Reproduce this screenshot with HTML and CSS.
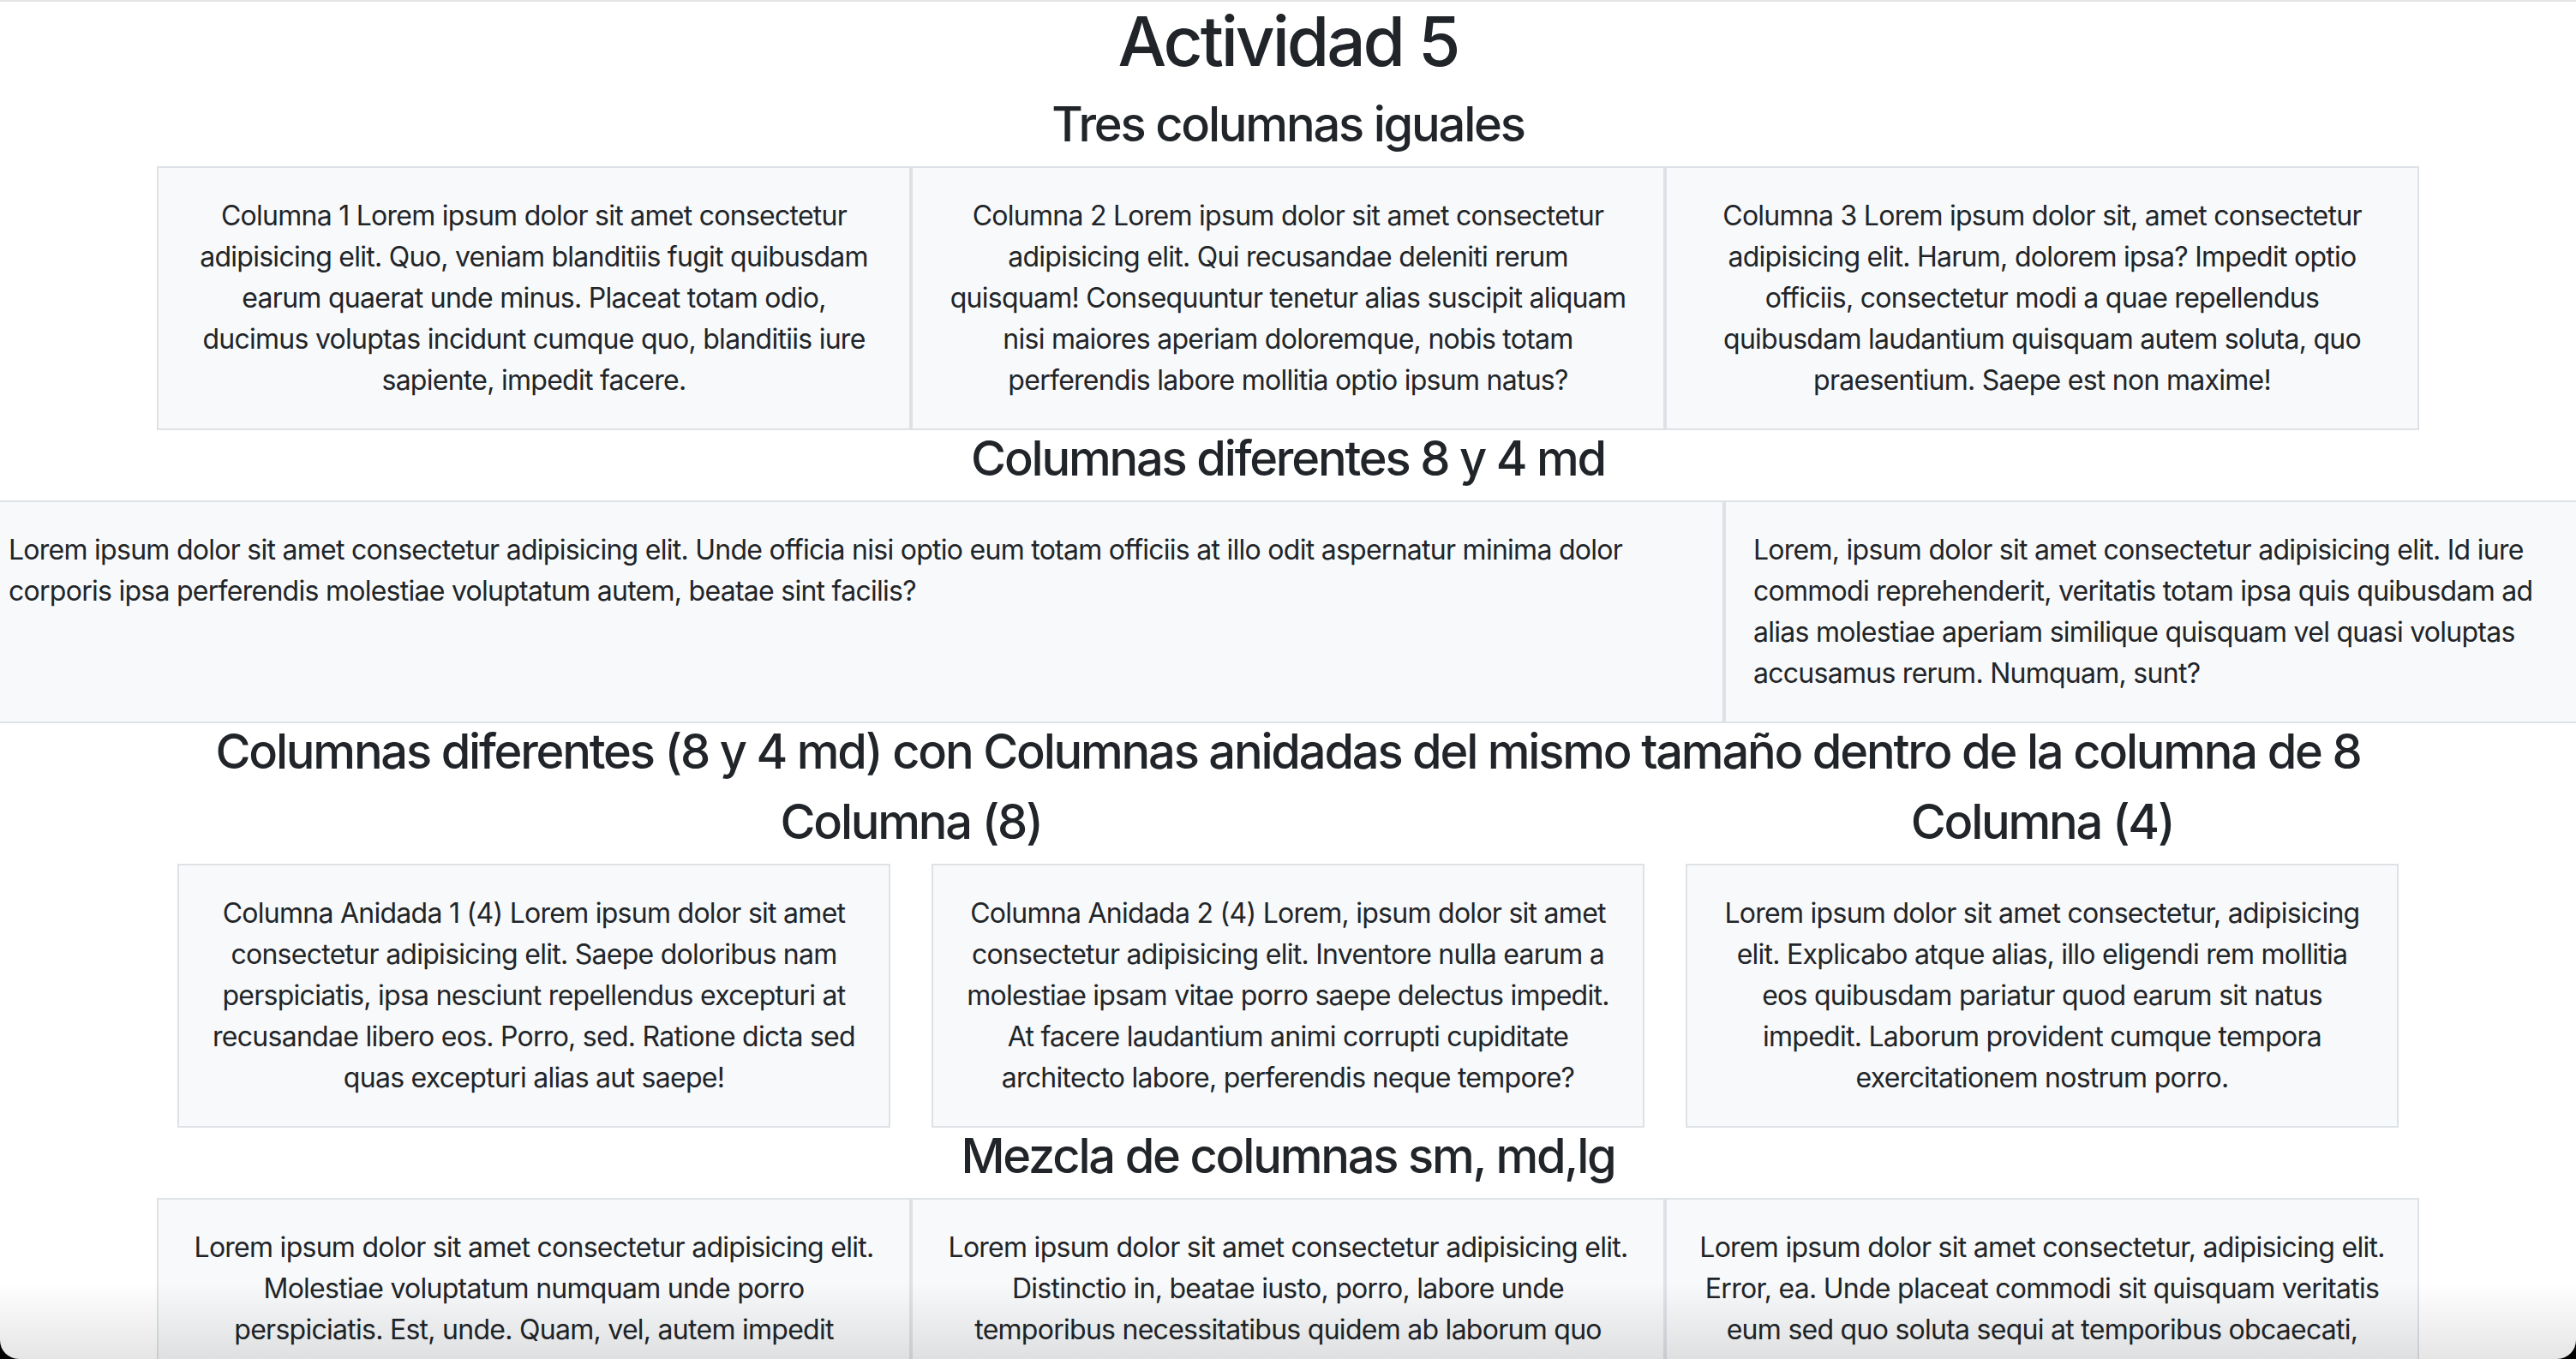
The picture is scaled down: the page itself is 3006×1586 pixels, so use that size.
FILE: index.html
```html
<!DOCTYPE html>
<html lang="es">
<head>
<meta charset="utf-8">
<title>Actividad 5</title>
<link rel="stylesheet" href="styles.css">
</head>
<body>
<div class="page">
  <h1 class="title">Actividad 5</h1>

  <h3 class="heading">Tres columnas iguales</h3>
  <div class="container">
    <div class="row-3">
      <div class="box center">Columna 1 Lorem ipsum dolor sit amet consectetur adipisicing elit. Quo, veniam blanditiis fugit quibusdam earum quaerat unde minus. Placeat totam odio, ducimus voluptas incidunt cumque quo, blanditiis iure sapiente, impedit facere.</div>
      <div class="box center">Columna 2 Lorem ipsum dolor sit amet consectetur adipisicing elit. Qui recusandae deleniti rerum quisquam! Consequuntur tenetur alias suscipit aliquam nisi maiores aperiam doloremque, nobis totam perferendis labore mollitia optio ipsum natus?</div>
      <div class="box center">Columna 3 Lorem ipsum dolor sit, amet consectetur adipisicing elit. Harum, dolorem ipsa? Impedit optio officiis, consectetur modi a quae repellendus quibusdam laudantium quisquam autem soluta, quo praesentium. Saepe est non maxime!</div>
    </div>
  </div>

  <h3 class="heading">Columnas diferentes 8 y 4 md</h3>
  <div class="row-wide">
    <div class="box">Lorem ipsum dolor sit amet consectetur adipisicing elit. Unde officia nisi optio eum totam officiis at illo odit aspernatur minima dolor corporis ipsa perferendis molestiae voluptatum autem, beatae sint facilis?</div>
    <div class="box">Lorem, ipsum dolor sit amet consectetur adipisicing elit. Id iure commodi reprehenderit, veritatis totam ipsa quis quibusdam ad alias molestiae aperiam similique quisquam vel quasi voluptas accusamus rerum. Numquam, sunt?</div>
  </div>

  <div class="container">
    <h3 class="heading">Columnas diferentes (8 y 4 md) con Columnas anidadas del mismo tamaño dentro de la columna de 8</h3>
    <div class="row-84">
      <div class="col">
        <h3 class="heading">Columna (8)</h3>
        <div class="row-nested">
          <div class="col"><div class="box center">Columna Anidada 1 (4) Lorem ipsum dolor sit amet consectetur adipisicing elit. Saepe doloribus nam perspiciatis, ipsa nesciunt repellendus excepturi at recusandae libero eos. Porro, sed. Ratione dicta sed quas excepturi alias aut saepe!</div></div>
          <div class="col"><div class="box center">Columna Anidada 2 (4) Lorem, ipsum dolor sit amet consectetur adipisicing elit. Inventore nulla earum a molestiae ipsam vitae porro saepe delectus impedit. At facere laudantium animi corrupti cupiditate architecto labore, perferendis neque tempore?</div></div>
        </div>
      </div>
      <div class="col">
        <h3 class="heading">Columna (4)</h3>
        <div class="box center">Lorem ipsum dolor sit amet consectetur, adipisicing elit. Explicabo atque alias, illo eligendi rem mollitia eos quibusdam pariatur quod earum sit natus impedit. Laborum provident cumque tempora exercitationem nostrum porro.</div>
      </div>
    </div>
  </div>

  <h3 class="heading">Mezcla de columnas sm, md,lg</h3>
  <div class="container">
    <div class="row-3">
      <div class="box center">Lorem ipsum dolor sit amet consectetur adipisicing elit. Molestiae voluptatum numquam unde porro perspiciatis. Est, unde. Quam, vel, autem impedit dolorum fugiat rem quas nostrum ullam sint.</div>
      <div class="box center">Lorem ipsum dolor sit amet consectetur adipisicing elit. Distinctio in, beatae iusto, porro, labore unde temporibus necessitatibus quidem ab laborum quo voluptatibus minus dolores.</div>
      <div class="box center">Lorem ipsum dolor sit amet consectetur, adipisicing elit. Error, ea. Unde placeat commodi sit quisquam veritatis eum sed quo soluta sequi at temporibus obcaecati, quibusdam natus ad.</div>
    </div>
  </div>
</div>
<div class="top-edge"></div>
<div class="window-frame"></div>
</body>
</html>
```

FILE: styles.css
```css
* { box-sizing: border-box; }

html, body {
  margin: 0;
  padding: 0;
}

body {
  background: #fff;
  color: #212529;
  font-family: Inter, "Noto Sans", "Liberation Sans", sans-serif;
  font-size: 32px;
  line-height: 48px;
  letter-spacing: -0.73px;
  overflow: hidden;
  height: 1586px;
}

.page {
  width: 100%;
}

.title {
  margin: 0 0 16px;
  font-size: 80px;
  line-height: 96px;
  font-weight: 500;
  letter-spacing: -3.1px;
  text-align: center;
}

.heading {
  margin: 0 0 16px;
  font-size: 56px;
  line-height: 66px;
  font-weight: 500;
  letter-spacing: -2.2px;
  text-align: center;
}

.container {
  max-width: 2640px;
  margin: 0 auto;
}

.row-3 {
  display: grid;
  grid-template-columns: 1fr 1fr 1fr;
}

.box {
  background: #f8f9fa;
  border: 2px solid #dee2e6;
  padding: 32px;
}

.center { text-align: center; }

.row-wide {
  display: grid;
  grid-template-columns: 2fr 1fr;
  margin: 0 -24px;
}

.row-84 {
  display: grid;
  grid-template-columns: 2fr 1fr;
}

.row-84 > .col {
  padding: 0 24px;
}

.row-nested {
  display: grid;
  grid-template-columns: 1fr 1fr;
  margin: 0 -24px;
}

.row-nested > .col {
  padding: 0 24px;
}

.top-edge {
  position: absolute;
  left: 0;
  top: 0;
  width: 100%;
  height: 2px;
  background: #e4e4e4;
}

.window-frame {
  position: absolute;
  left: 0;
  top: 0;
  width: 3006px;
  height: 1586px;
  overflow: hidden;
  pointer-events: none;
}

.window-frame::before {
  content: "";
  position: absolute;
  left: 0;
  right: 0;
  bottom: 0;
  height: 90px;
  background: linear-gradient(to bottom, rgba(0,0,0,0) 0%, rgba(0,0,0,0.10) 100%);
}

.window-frame::after {
  content: "";
  position: absolute;
  left: 0;
  top: -40px;
  width: 3006px;
  height: 1626px;
  border-radius: 0 0 22px 22px;
  box-shadow: 0 0 0 40px #000;
}
```
